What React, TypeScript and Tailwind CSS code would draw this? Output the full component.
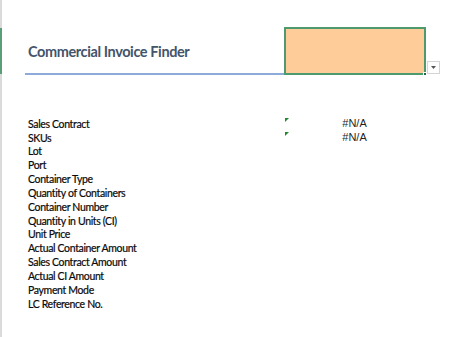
import React from "react";

const labels = [
  "Sales Contract",
  "SKUs",
  "Lot",
  "Port",
  "Container Type",
  "Quantity of Containers",
  "Container Number",
  "Quantity in Units (CI)",
  "Unit Price",
  "Actual Container Amount",
  "Sales Contract Amount",
  "Actual CI Amount",
  "Payment Mode",
  "LC Reference No.",
];

export default function App() {
  return (
    <div className="w-[449px] h-[337px] bg-white flex overflow-hidden">
      <div className="w-[2px] flex flex-col">
        <div className="h-[28px] bg-[#dadada]" />
        <div className="h-[46px] bg-[#5a9e78]" />
        <div className="flex-1 bg-[#dadada]" />
      </div>
      <div className="flex-1 flex flex-col pl-[23px]">
        <div className="flex items-end mt-[27px]">
          <div className="w-[259px] h-[47px] border-b-2 border-[#8eaadb] flex items-end pb-[14px] pl-[3px]">
            <span
              className="text-[14.5px] font-bold tracking-[-0.4px] text-[#44546a] leading-none"
              style={{ fontFamily: "Lato, 'Open Sans', sans-serif" }}
            >
              Commercial Invoice Finder
            </span>
          </div>
          <div className="relative w-[142px] h-[48px] bg-[#fecc99] border-2 border-[#4d9a6e]">
            <div className="absolute right-[-3px] bottom-[-3px] w-[4px] h-[4px] bg-[#1e6b41] border border-white" />
          </div>
          <div className="w-[13px] h-[13px] mb-[1px] ml-[1px] border border-[#d4d4d4] bg-white flex items-center justify-center">
            <svg width="5" height="3" viewBox="0 0 5 3">
              <path d="M0 0 H5 L2.5 3 Z" fill="#555" />
            </svg>
          </div>
        </div>
        <div className="mt-[42px] flex flex-col">
          {labels.map((l, i) => (
            <div key={l} className="flex h-[13.85px] items-center">
              <div
                className="w-[258px] pl-[3px] text-[10.5px] tracking-[-0.35px] leading-none text-[#0a0a0a]"
                style={{ fontFamily: "Lato, 'Open Sans', sans-serif", WebkitTextStroke: "0.2px #0a0a0a" }}
              >
                {l}
              </div>
              <div className="relative w-[141px] h-full flex items-center justify-center">
                {i < 2 && (
                  <>
                    <svg className="absolute left-[2px] top-[1px]" width="4" height="4" viewBox="0 0 4 4">
                      <path d="M0 0 H4 L0 4 Z" fill="#1d8a2e" />
                    </svg>
                    <span
                      className="text-[11px] leading-none text-[#1f1f1f] pl-[2px]"
                      style={{ fontFamily: "'Liberation Sans', Arial, sans-serif" }}
                    >
                      #N/A
                    </span>
                  </>
                )}
              </div>
            </div>
          ))}
        </div>
      </div>
    </div>
  );
}
